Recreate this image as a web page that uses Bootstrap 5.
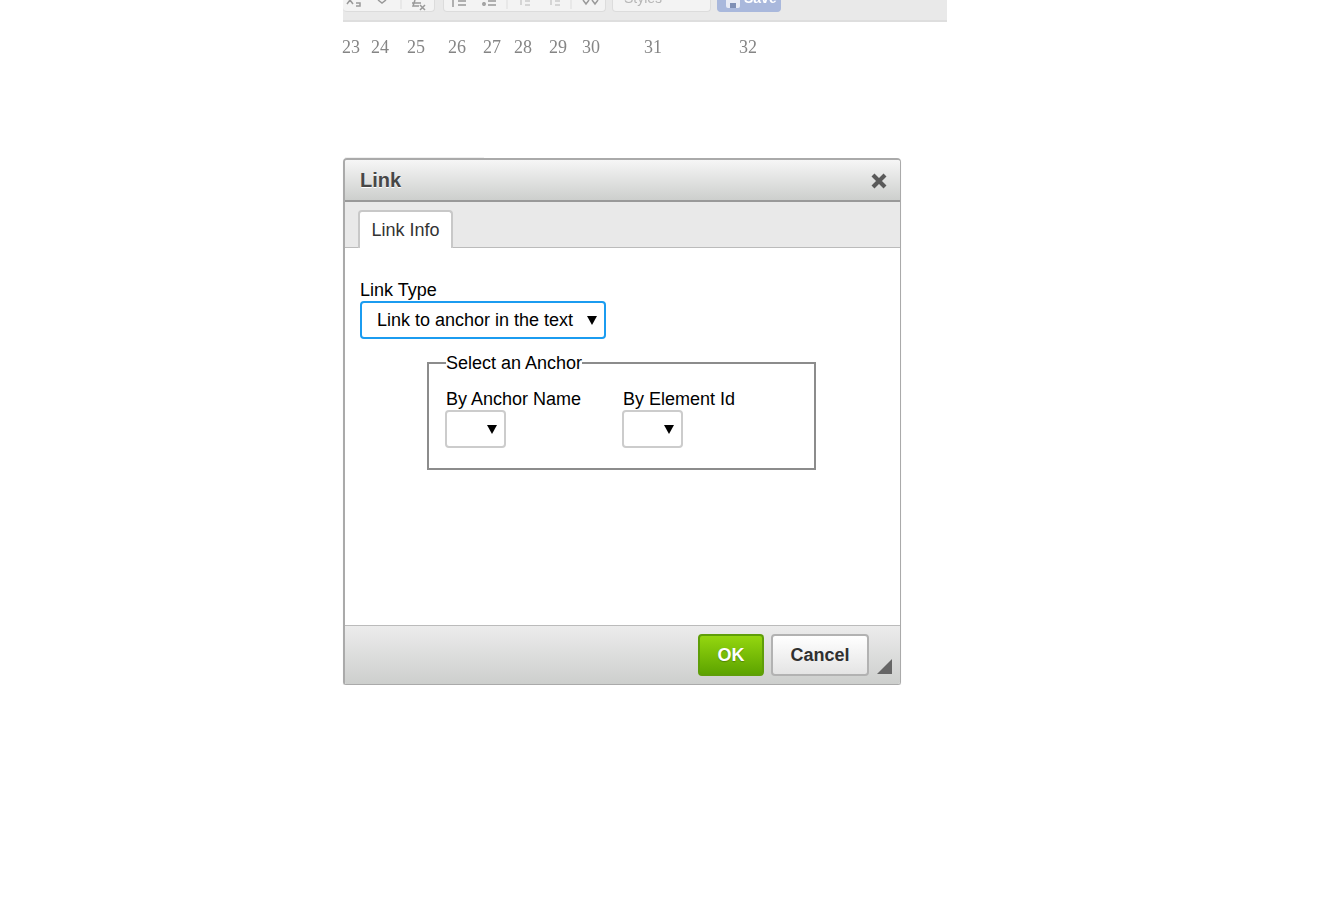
<!DOCTYPE html>
<html lang="en">
<head>
  <meta charset="UTF-8" />
  <meta name="viewport" content="width=device-width, initial-scale=1.0"/>
  <title>Link dialog</title>
  <link href="https://cdn.jsdelivr.net/npm/bootstrap@5.3.0/dist/css/bootstrap.min.css" rel="stylesheet"/>
  <style>
    body {
      font-family: "Liberation Sans", Arial, sans-serif;
      font-size: 18px;
      color: #000;
      background: #fff;
      overflow: hidden;
    }
    .page-wrap { margin-left: 343px; }

    /* cropped editor toolbar at the top */
    .editor-bar {
      width: 604px;
      height: 22px;
      background: #e9e9e9;
      border-bottom: 2px solid #dedede;
      overflow: hidden;
      filter: blur(.7px);
    }
    .bar-group {
      position: relative;
      height: 12px;
      background: #f3f3f3;
      border: 1px solid #dcdcdc;
      border-top: 0;
      border-radius: 0 0 4px 4px;
      color: #999;
    }
    .bar-one { width: 92px; margin-right: 8px; border-left: 0; }
    .bar-two { width: 163px; margin-right: 6px; }
    .bar-combo {
      width: 99px;
      margin-right: 6px;
      font-size: 14px;
      line-height: 1;
      padding-left: 11px;
      color: #b5b5b5;
    }
    .bar-combo span, .bar-save span { position: relative; top: -9px; }
    .bar-save {
      width: 64px;
      background: #a9b8dc;
      border-color: #a9b8dc;
      color: #fff;
      font-size: 14px;
      font-weight: 700;
      line-height: 1;
      padding-left: 26px;
    }
    .bar-group svg { display: block; position: absolute; top: 0; left: 0; }

    /* numbers row */
    .num-row {
      height: 22px;
      margin-top: 14px;
      margin-left: -1px;
      font-family: "Liberation Serif", "Times New Roman", serif;
      font-size: 18px;
      line-height: 22px;
      color: #858585;
      filter: blur(.4px);
    }
    .num-row span:nth-child(2) { margin-left: 11px; }
    .num-row span:nth-child(3) { margin-left: 18px; }
    .num-row span:nth-child(4) { margin-left: 23px; }
    .num-row span:nth-child(5) { margin-left: 17px; }
    .num-row span:nth-child(6) { margin-left: 13px; }
    .num-row span:nth-child(7) { margin-left: 17px; }
    .num-row span:nth-child(8) { margin-left: 15px; }
    .num-row span:nth-child(9) { margin-left: 44px; }
    .num-row span:nth-child(10) { margin-left: 77px; }

    /* dialog */
    .ghost-edge {
      width: 139px;
      height: 1px;
      margin: 99px 0 0 2px;
      background: #f0f0f0;
    }
    .link-dialog {
      width: 558px;
      height: 527px;
      border: 1px solid #aaa;
      border-top: 2px solid #aaa;
      border-left-width: 2px;
      border-radius: 4px 4px 3px 3px;
      box-shadow: 0 1px 1px rgba(0,0,0,.12);
      overflow: hidden;
    }
    .dlg-title {
      height: 42px;
      padding: 0 13px 0 15px;
      background: linear-gradient(#f6f6f6, #cdcfcd);
      border-bottom: 2px solid #999;
      font-size: 20px;
      font-weight: 700;
      color: #474747;
      text-shadow: 0 1px 0 #fff;
    }
    .dlg-title svg { margin-top: 2px; }
    .dlg-tabs {
      height: 46px;
      padding: 8px 0 0 13px;
      background: #e9e9e9;
      border-bottom: 1px solid #bbb;
    }
    .tab-item {
      width: 95px;
      height: 38px;
      background: #fff;
      border: 2px solid #c8c8c8;
      border-bottom: 0;
      border-radius: 4px 4px 0 0;
      color: #333;
      line-height: 37px;
      text-align: center;
    }
    .dlg-body { padding: 32px 0 0 15px; }
    .field-label { line-height: 20px; }
    .pick {
      display: block;
      appearance: none;
      -webkit-appearance: none;
      background: #fff url("data:image/svg+xml,%3Csvg xmlns='http://www.w3.org/2000/svg' width='10' height='9'%3E%3Cpath d='M0 0h10L5 9z'/%3E%3C/svg%3E") no-repeat;
      border: 2px solid #ccc;
      border-radius: 4px;
      height: 38px;
      outline: 0;
      font-size: 18px;
      color: #000;
    }
    .pick-type {
      width: 246px;
      padding: 0 0 0 15px;
      border-color: #1b9cf0;
      background-position: 225px 13px;
      margin-top: 1px;
    }
    .pick-small {
      width: 61px;
      padding: 0;
      background-position: 40px 13px;
      margin-top: 1px;
    }
    .anchor-set {
      box-sizing: border-box;
      width: 389px;
      height: 117px;
      margin: 14px 0 0 67px;
      padding: 0 16px;
      border: 2px solid #8c8c8c;
      min-width: 0;
    }
    .anchor-set legend {
      float: none;
      width: auto;
      margin: 0 0 0 1px;
      padding: 0;
      font-size: 18px;
      line-height: 20px;
      height: 20px;
    }
    .anchor-cols { gap: 41px; margin-top: 16px; }
    .anchor-cols .field-label { padding-left: 1px; }
    .dlg-foot {
      height: 59px;
      padding: 8px 8px 0 0;
      border-top: 1px solid #bbb;
      background: linear-gradient(#ececec, #cdcfcd);
    }
    .foot-btn {
      height: 42px;
      padding: 0;
      font-size: 18px;
      font-weight: 700;
      border-radius: 4px;
    }
    .btn-ok {
      width: 66px;
      color: #fff;
      background: linear-gradient(#94d60f, #5da400);
      border: 2px solid #5f9e08;
      text-shadow: 0 1px 1px rgba(0,0,0,.25);
    }
    .btn-cancel {
      width: 98px;
      margin-left: 7px;
      color: #303030;
      background: linear-gradient(#fff, #e4e4e4);
      border: 2px solid #b2b2b2;
    }
    .grip { margin: 25px 0 0 8px; display: block; }
  </style>
</head>
<body class="m-0">

  <div class="page-wrap">
    <!-- cropped toolbar -->
    <div class="editor-bar d-flex align-items-start">
      <div class="bar-group bar-one">
        <svg width="92" height="12"><g fill="none" stroke="#999" stroke-width="1.5"><path d="M4 4l3-4 3 4M13 3h4v3h-4"/><path d="M35 0l4 3 4-3"/><path d="M69 3h9M72 0l-2 6h6"/><path d="M77 5l5 5M82 5l-5 5"/></g><path d="M58 0v9" stroke="#ddd"/></svg>
      </div>
      <div class="bar-group bar-two">
        <svg width="163" height="12"><g fill="none" stroke="#999" stroke-width="1.5"><path d="M9 0v7M14 1h8M14 5h8"/><path d="M44 1h8"/><path d="M44 5h8"/><circle cx="40" cy="4" r="1.2"/></g><g fill="none" stroke="#ccc" stroke-width="1.5"><path d="M77 0v5M81 1h5M81 5h5"/><path d="M107 0v5M111 1h5M111 5h5"/></g><path d="M63 0v9M127 0v9" stroke="#ddd"/><path d="M139 0l3 4 3-4M148 0l3 4 3-4" fill="none" stroke="#999" stroke-width="1.5"/></svg>
      </div>
      <div class="bar-group bar-combo"><span>Styles</span></div>
      <div class="bar-group bar-save">
        <svg width="24" height="12"><path d="M8 0h14v6a2 2 0 0 1-2 2H10a2 2 0 0 1-2-2z" fill="#e8ebf5"/><path d="M12 3h6v5h-6z" fill="#7f8fb5"/></svg>
        <span>Save</span>
      </div>
    </div>

    <div class="num-row">
      <span>23</span><span>24</span><span>25</span><span>26</span><span>27</span><span>28</span><span>29</span><span>30</span><span>31</span><span>32</span>
    </div>

    <div class="ghost-edge"></div>

    <!-- link dialog -->
    <div class="link-dialog d-flex flex-column">
      <div class="dlg-title d-flex align-items-center justify-content-between">
        <span>Link</span>
        <svg width="16" height="16" viewBox="0 0 16 16"><path d="M2 2l12 12M14 2L2 14" stroke="#5a5a5a" stroke-width="4.2"/></svg>
      </div>
      <div class="dlg-tabs">
        <div class="tab-item">Link Info</div>
      </div>
      <div class="dlg-body flex-grow-1">
        <div class="field-label">Link Type</div>
        <select class="pick pick-type"><option>Link to anchor in the text</option></select>
        <fieldset class="anchor-set">
          <legend>Select an Anchor</legend>
          <div class="anchor-cols d-flex">
            <div>
              <div class="field-label">By Anchor Name</div>
              <select class="pick pick-small"><option></option></select>
            </div>
            <div>
              <div class="field-label">By Element Id</div>
              <select class="pick pick-small"><option></option></select>
            </div>
          </div>
        </fieldset>
      </div>
      <div class="dlg-foot d-flex justify-content-end align-items-start">
        <button class="btn foot-btn btn-ok">OK</button>
        <button class="btn foot-btn btn-cancel">Cancel</button>
        <svg class="grip" width="15" height="15"><path d="M15 0v15H0z" fill="#666"/></svg>
      </div>
    </div>
  </div>

  <script src="https://cdn.jsdelivr.net/npm/bootstrap@5.3.0/dist/js/bootstrap.bundle.min.js"></script>
</body>
</html>
